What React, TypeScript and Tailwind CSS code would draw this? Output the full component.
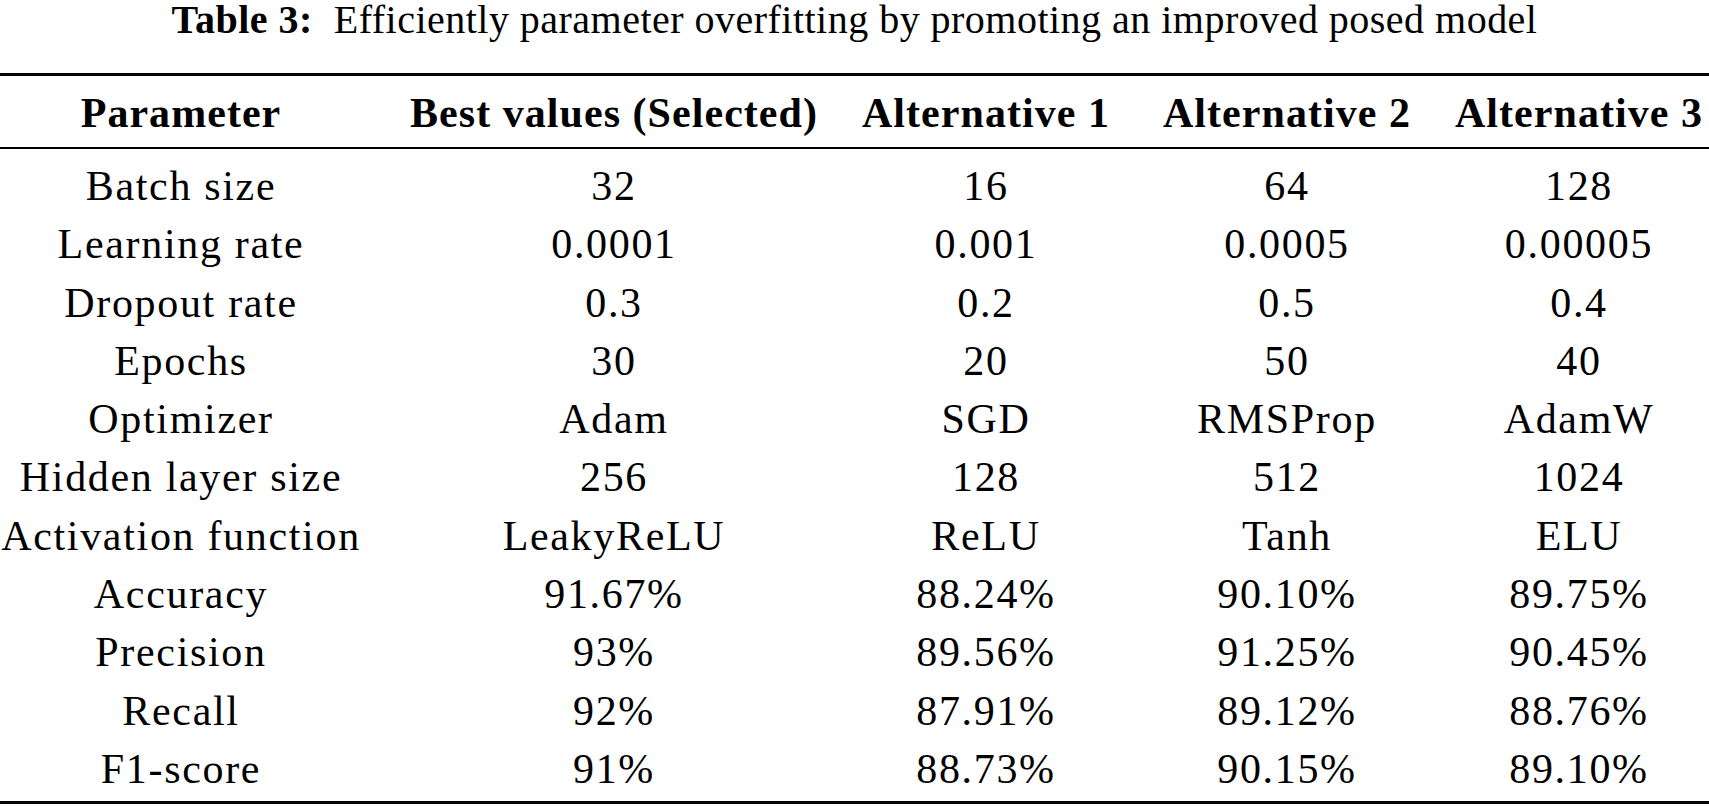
import React from 'react';

const rows: string[][] = [
  ['Batch size', '32', '16', '64', '128'],
  ['Learning rate', '0.0001', '0.001', '0.0005', '0.00005'],
  ['Dropout rate', '0.3', '0.2', '0.5', '0.4'],
  ['Epochs', '30', '20', '50', '40'],
  ['Optimizer', 'Adam', 'SGD', 'RMSProp', 'AdamW'],
  ['Hidden layer size', '256', '128', '512', '1024'],
  ['Activation function', 'LeakyReLU', 'ReLU', 'Tanh', 'ELU'],
  ['Accuracy', '91.67%', '88.24%', '90.10%', '89.75%'],
  ['Precision', '93%', '89.56%', '91.25%', '90.45%'],
  ['Recall', '92%', '87.91%', '89.12%', '88.76%'],
  ['F1-score', '91%', '88.73%', '90.15%', '89.10%'],
];

const headers = ['Parameter', 'Best values (Selected)', 'Alternative 1', 'Alternative 2', 'Alternative 3'];

// column template shared by header and body rows
const cols = 'grid grid-cols-[381px_466px_278px_324px_260px]';

export default function App() {
  return (
    <div className="w-[1709px] h-[806px] bg-white text-black overflow-hidden font-['Liberation_Serif',serif]">
      {/* caption */}
      <div className="h-[73px] flex justify-center items-start text-[40px] leading-[40px] tracking-[0.012em] whitespace-pre">
        <span className="font-bold">Table 3:</span>
        <span>  Efficiently parameter overfitting by promoting an improved posed model</span>
      </div>

      <div className="border-t-[3px] border-black" />

      {/* header row */}
      <div className={`${cols} h-[71px] pt-[5px] font-bold text-[42px] leading-[65px] tracking-[0.025em]`}>
        {headers.map((h, i) => (
          <div key={h} className={`text-center whitespace-nowrap ${i === 0 ? 'pr-[19px]' : ''}`}>
            {h}
          </div>
        ))}
      </div>

      <div className="border-t-2 border-black" />

      {/* body */}
      <div className="pt-[8px] text-[42px] tracking-[0.04em]">
        {rows.map((r) => (
          <div key={r[0]} className={`${cols} h-[58.3px] leading-[58.3px]`}>
            {r.map((c, i) => (
              <div key={i} className={`text-center whitespace-nowrap ${i === 0 ? 'pr-[19px]' : ''}`}>
                {c}
              </div>
            ))}
          </div>
        ))}
      </div>

      <div className="mt-[2.5px] border-t-[3px] border-black" />
    </div>
  );
}
